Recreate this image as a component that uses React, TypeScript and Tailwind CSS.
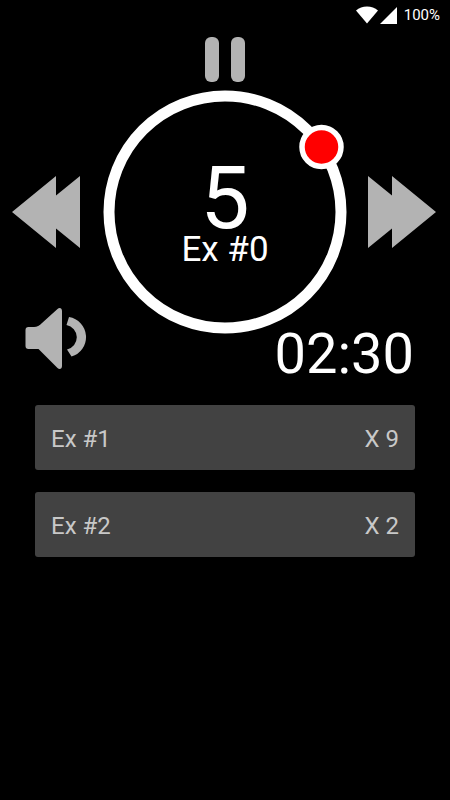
import { useState } from "react";

interface Exercise {
  name: string;
  reps: number;
}

const upcoming: Exercise[] = [
  { name: "Ex #1", reps: 9 },
  { name: "Ex #2", reps: 2 },
];

const StatusBar = () => (
  <header className="flex h-[30px] items-center justify-end pr-[10px]">
    <svg width="22" height="18" viewBox="0 0 22 18" fill="#fff" aria-hidden="true">
      <path d="M0 4.5C3 1.7 6.8 0.5 11 0.5S19 1.7 22 4.5L11 17.5Z" />
    </svg>
    <svg width="17" height="17" viewBox="0 0 17 17" fill="#fff" className="ml-[2px]" aria-hidden="true">
      <path d="M17 0V17H0Z" />
    </svg>
    <span className="ml-[7px] text-[15px] leading-4">100%</span>
  </header>
);

// countdown ring with the seconds and the current exercise inside
const TimerRing = ({ seconds, name }: { seconds: number; name: string }) => (
  <div className="relative h-[244px] w-[244px]">
    <svg width="244" height="244" viewBox="0 0 244 244" aria-hidden="true" className="overflow-visible">
      <circle cx="122" cy="122" r="116" fill="none" stroke="#fff" strokeWidth="11" />
      <circle cx="218.5" cy="57" r="19.5" fill="#f00" stroke="#fff" strokeWidth="5.5" />
    </svg>
    <div className="absolute inset-0 flex flex-col items-center pt-[74px]">
      <span className="text-[88px] leading-[68px]">{seconds}</span>
      <span className="text-[35px] leading-9">{name}</span>
    </div>
  </div>
);

const App = () => {
  const [paused, setPaused] = useState<boolean>(false);
  const [muted, setMuted] = useState<boolean>(false);

  return (
    <main className="min-h-screen bg-black font-['Roboto',sans-serif] text-white">
      <StatusBar />

      <div className="flex h-[60px] justify-center pt-[7px]">
        <button
          type="button"
          aria-label="Pause"
          aria-pressed={paused}
          onClick={() => setPaused(!paused)}
          className="flex h-[45px] gap-3"
        >
          <span className="h-full w-[14px] rounded-[6px] bg-[#b3b3b3]" />
          <span className="h-full w-[14px] rounded-[6px] bg-[#b3b3b3]" />
        </button>
      </div>

      <div className="grid grid-cols-[1fr_auto_1fr] items-center">
        <button type="button" aria-label="Previous exercise" className="justify-self-start pl-3">
          <svg width="68" height="72" viewBox="0 0 68 72" fill="#b3b3b3">
            <path d="M0 36L44 0V19.5L68 0V72L44 52.5V72Z" />
          </svg>
        </button>
        <TimerRing seconds={5} name="Ex #0" />
        <button type="button" aria-label="Next exercise" className="justify-self-end pr-[14px]">
          <svg width="68" height="72" viewBox="0 0 68 72" fill="#b3b3b3">
            <path d="M68 36L24 0V19.5L0 0V72L24 52.5V72Z" />
          </svg>
        </button>
      </div>

      <div className="-mt-[26px] flex items-start justify-between pr-9 pl-[25px]">
        <button
          type="button"
          aria-label="Sound"
          aria-pressed={!muted}
          onClick={() => setMuted(!muted)}
        >
          <svg width="62" height="61" viewBox="0 0 62 61" fill="#b3b3b3">
            <path d="M3.5 19H9C12 19 14.5 17.5 17 15L32.5 1C34.5 -0.7 37 0 37 3V58C37 61 34.5 61.7 32.500 60L13.5 41H3.5C1.500 41 0.500 40 0.500 38V22C0.500 20 1.500 19 3.5 19Z" />
            {!muted && (
              <path d="M44 9A20.3 20.3 0 0 1 46.5 48.5L42 41.5A12.5 12.5 0 0 0 41.5 17Z" />
            )}
          </svg>
        </button>
        <time className="pt-4 text-[56px] leading-[60px]">02:30</time>
      </div>

      <ul className="mt-[21px] flex flex-col gap-[22px] px-[35px]">
        {upcoming.map((exercise) => (
          <li
            key={exercise.name}
            className="flex h-[65px] items-center justify-between rounded-[3px] bg-[#424242] px-4 pt-[2px] text-2xl text-[#c8c8c8]"
          >
            <span>{exercise.name}</span>
            <span>X {exercise.reps}</span>
          </li>
        ))}
      </ul>
    </main>
  );
};

export default App;
